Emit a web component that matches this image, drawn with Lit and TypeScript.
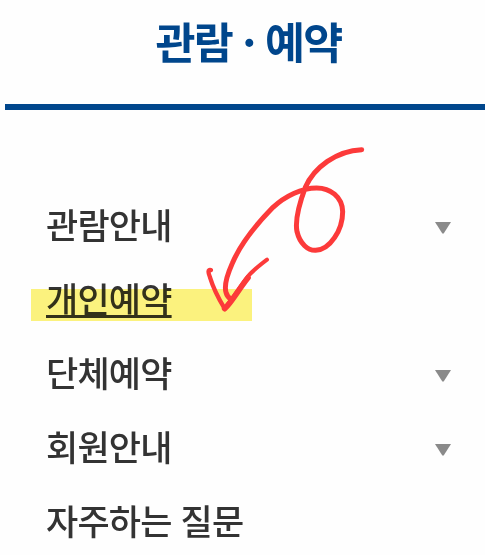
import { LitElement, html, css, svg, nothing } from "lit";
import { customElement } from "lit/decorators.js";
import { classMap } from "lit/directives/class-map.js";

interface MenuItem {
  label: string;
  expandable?: boolean;
  current?: boolean;
}

const ITEMS: MenuItem[] = [
  { label: "관람안내", expandable: true },
  { label: "개인예약", current: true },
  { label: "단체예약", expandable: true },
  { label: "회원안내", expandable: true },
  { label: "자주하는 질문" },
];

@customElement("app-root")
export class AppRoot extends LitElement {
  static styles = css`
    :host {
      display: block;
      position: relative;
      width: 485px;
      height: 555px;
      overflow: hidden;
      background: #fefefe;
      font-family: "Noto Sans CJK KR", "Noto Sans", sans-serif;
    }
    header {
      box-sizing: border-box;
      height: 110px;
      margin-left: 5px;
      border-bottom: 6px solid #00468c;
    }
    h1 {
      margin: 0;
      padding-left: 7px;
      font-size: 43.5px;
      line-height: 81px;
      font-weight: 700;
      letter-spacing: -1.8px;
      word-spacing: -3.5px;
      text-align: center;
      color: #00468c;
      white-space: nowrap;
    }
    ul {
      list-style: none;
      margin: 0;
      padding: 77px 34px 0 46px;
    }
    li {
      display: flex;
      align-items: center;
      justify-content: space-between;
      height: 74px;
    }
    .label {
      font-size: 35px;
      line-height: 74px;
      font-weight: 500;
      letter-spacing: -0.8px;
      word-spacing: 1.8px;
      color: #333;
      white-space: nowrap;
    }
    .current .label {
      text-decoration: underline;
      text-decoration-thickness: 3px;
      text-underline-offset: 2px;
      text-decoration-skip-ink: none;
    }
    .caret {
      width: 16px;
      height: 12px;
      margin-top: 8px;
      fill: #8a8a8a;
    }
    .highlight {
      position: absolute;
      left: 31px;
      top: 289px;
      width: 221px;
      height: 32px;
      background: #fcf37e;
      mix-blend-mode: multiply;
    }
    .arrow {
      position: absolute;
      left: 190px;
      top: 130px;
      width: 190px;
      height: 190px;
      fill: none;
      stroke: #fc3a3a;
      stroke-linecap: round;
      stroke-linejoin: round;
    }
  `;

  private caret() {
    return html`<svg class="caret" viewBox="0 0 16 12">${svg`<path d="M0 0H16L8.7 11.5H7.3Z" />`}</svg>`;
  }

  render() {
    return html`
      <header><h1>관람 · 예약</h1></header>
      <ul>
        ${ITEMS.map(
          (item) => html`<li class=${classMap({ current: !!item.current })}>
            <span class="label">${item.label}</span>
            ${item.expandable ? this.caret() : nothing}
          </li>`
        )}
      </ul>
      <div class="highlight"></div>
      <svg class="arrow" viewBox="0 0 570 570">
        <path
          stroke-width="15"
          d="M515 59C440 62 372 112 346 172C330 215 314 270 321 305C330 342 354 362 377 361C420 359 458 300 458 245C457 200 420 174 380 174C335 174 285 198 249 232C202 280 150 345 127 400C110 438 103 470 108 487C111 499 117 504 124 508"
        />
        <path stroke-width="13" d="M63 420C52 417 55 429 60 442C70 475 87 508 104 536" />
        <path stroke-width="17" d="M104 536C126 516 145 479 174 443" />
        <path stroke-width="12" d="M104 534C126 510 148 473 174 439C190 420 210 405 231 389" />
      </svg>
    `;
  }
}
